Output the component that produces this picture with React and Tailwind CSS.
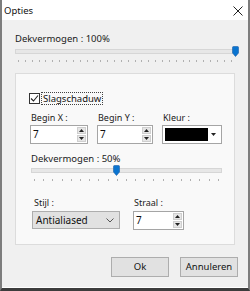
import React from 'react';

const font = { fontFamily: '"Noto Sans", "Liberation Sans", sans-serif' };

const Ticks = ({ count }) => (
  <div className="flex justify-between px-[3px] mt-[3px]">
    {Array.from({ length: count }).map((_, i) => (
      <span key={i} className="block w-px h-[2px] bg-[#b0b0b0]" />
    ))}
  </div>
);

const Thumb = () => (
  <svg width="7" height="11" viewBox="0 0 7 11">
    <path d="M0.5 1.5 Q0.5 0.5 1.5 0.5 H5.5 Q6.5 0.5 6.5 1.5 V7 L3.5 10.5 L0.5 7 Z" fill="#0a74d0" stroke="#1d5fa8" strokeWidth="0.6" />
  </svg>
);

const Slider = ({ thumbLeft, ticks }) => (
  <div>
    <div className="relative h-[11px]">
      <div className="absolute left-0 right-0 top-[3px] h-[5px] bg-[#e7e7e7] border border-[#d6d6d6]" />
      <div className="absolute top-0" style={{ left: thumbLeft }}>
        <Thumb />
      </div>
    </div>
    <Ticks count={ticks} />
  </div>
);

const Arrow = ({ up }) => (
  <svg width="5" height="3" viewBox="0 0 5 3">
    <path d={up ? 'M2.5 0 L5 3 H0 Z' : 'M0 0 H5 L2.5 3 Z'} fill="#222" />
  </svg>
);

const Spin = ({ value, w }) => (
  <div className={`${w} h-[19px] bg-white border border-[#a5a5a5] flex`}>
    <span className="flex-1 pl-[2px] text-[10px] leading-[17px] text-[#111]">{value}</span>
    <div className="w-[10px] flex flex-col gap-px py-px pr-px">
      <div className="flex-1 bg-[#e6e6e6] border border-[#cfcfcf] flex items-center justify-center"><Arrow up /></div>
      <div className="flex-1 bg-[#e6e6e6] border border-[#cfcfcf] flex items-center justify-center"><Arrow /></div>
    </div>
  </div>
);

const Label = ({ children, mb }) => (
  <div className={`text-[9px] leading-[12px] text-[#1a1a1a] ${mb}`}>{children}</div>
);

export default function App() {
  return (
    <div style={font} className="w-[250px] h-[291px] flex flex-col bg-[#f0f0f0] border-l-2 border-r-2 border-b-[3px] border-l-[#7d7d7d] border-r-[#7d7d7d] border-b-[#3c3c3c]">
      {/* title bar */}
      <div className="h-[20px] bg-white flex items-center justify-between pl-[2px] pr-[5px]">
        <span className="text-[9.5px] text-[#111] pt-[3px]">Opties</span>
        <svg width="10" height="10" viewBox="0 0 10 10" className="mt-[1px]">
          <path d="M0.5 0.5 L9.5 9.5 M9.5 0.5 L0.5 9.5" stroke="#222" strokeWidth="1" />
        </svg>
      </div>

      <div className="flex-1 flex flex-col px-[13px] border-b border-b-white">
        <div className="mt-[13px] text-[9.5px] leading-[12px] text-[#1a1a1a]">Dekvermogen : 100%</div>
        <div className="mt-[1px]">
          <Slider thumbLeft="217px" ticks={32} />
        </div>

        {/* group box */}
        <div className="mt-[11px] h-[172px] bg-[#f9f9f9] border border-[#dcdcdc] pl-[14px] pr-[13px]">
          <div className="mt-[18px] -ml-px flex items-center h-[13px]">
            <span className="w-[11px] h-[11px] border border-[#333] bg-white flex items-center justify-center">
              <svg width="9" height="9" viewBox="0 0 9 9">
                <path d="M1 4.5 L3.5 7 L8 1.5" fill="none" stroke="#222" strokeWidth="1.1" />
              </svg>
            </span>
            <span className="ml-px px-px text-[9.5px] leading-[11px] text-[#111] border border-dotted border-[#444]">Slagschaduw</span>
          </div>

          <div className="mt-[7px] flex gap-[9px]">
            <div>
              <Label mb="mb-px pl-px">Begin X :</Label>
              <Spin value="7" w="w-[58px]" />
            </div>
            <div>
              <Label mb="mb-px pl-px">Begin Y :</Label>
              <Spin value="7" w="w-[56px]" />
            </div>
            <div>
              <Label mb="mb-px pl-px">Kleur :</Label>
              <div className="w-[60px] h-[19px] bg-white border border-[#a5a5a5] flex items-center p-[2px]">
                <div className="w-[43px] h-full bg-black" />
                <div className="flex-1 flex items-center justify-center"><Arrow /></div>
              </div>
            </div>
          </div>

          <div className="mt-[9px] pl-px text-[9.5px] leading-[12px] text-[#1a1a1a]">Dekvermogen : 50%</div>
          <div className="pl-px w-[192px]">
            <Slider thumbLeft="82px" ticks={21} />
          </div>

          <div className="mt-[16px] flex gap-[13px] pl-[2px]">
            <div>
              <Label mb="mb-[2px] pl-[2px]">Stijl :</Label>
              <div className="w-[88px] h-[18px] bg-[#e1e1e1] border border-[#adadad] flex items-center justify-between pl-[3px] pr-[5px]">
                <span className="text-[10px] text-[#111]">Antialiased</span>
                <svg width="8" height="5" viewBox="0 0 8 5">
                  <path d="M0.5 0.5 L4 4 L7.5 0.5" fill="none" stroke="#555" strokeWidth="1" />
                </svg>
              </div>
            </div>
            <div>
              <Label mb="mb-[2px] pl-px">Straal :</Label>
              <Spin value="7" w="w-[51px]" />
            </div>
          </div>
        </div>

        {/* buttons */}
        <div className="mt-[12px] flex justify-end gap-[11px] -mr-[3px]">
          <button className="w-[58px] h-[20px] bg-[#e1e1e1] border border-[#adadad] text-[9.5px] text-[#111]">Ok</button>
          <button className="w-[58px] h-[20px] bg-[#e1e1e1] border border-[#adadad] text-[9.5px] text-[#111]">Annuleren</button>
        </div>
      </div>
    </div>
  );
}
